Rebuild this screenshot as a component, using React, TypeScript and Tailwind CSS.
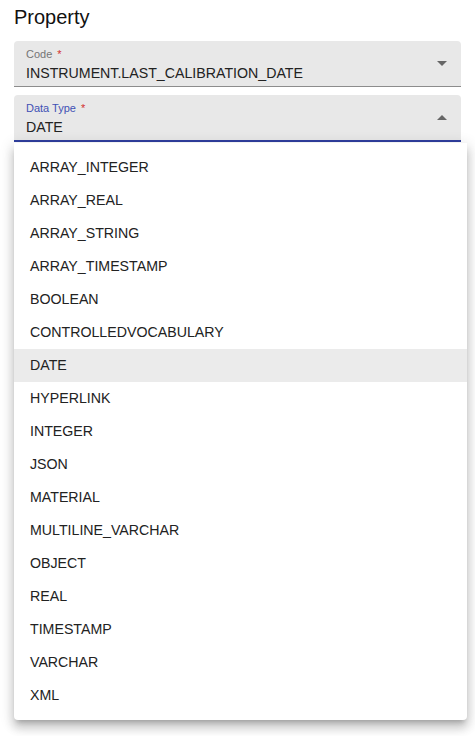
import React from "react";

const items = [
  "ARRAY_INTEGER",
  "ARRAY_REAL",
  "ARRAY_STRING",
  "ARRAY_TIMESTAMP",
  "BOOLEAN",
  "CONTROLLEDVOCABULARY",
  "DATE",
  "HYPERLINK",
  "INTEGER",
  "JSON",
  "MATERIAL",
  "MULTILINE_VARCHAR",
  "OBJECT",
  "REAL",
  "TIMESTAMP",
  "VARCHAR",
  "XML",
];

function Arrow({ up }: { up?: boolean }) {
  return (
    <svg width="10" height="5" viewBox="0 0 10 5" className="shrink-0">
      {up ? <path d="M0 5 L5 0 L10 5 Z" fill="#666" /> : <path d="M0 0 L5 5 L10 0 Z" fill="#666" />}
    </svg>
  );
}

export default function App() {
  return (
    <div className="w-[475px] h-[736px] bg-white relative overflow-hidden" style={{ fontFamily: "'Liberation Sans', Arial, sans-serif" }}>
      <div className="px-[14px] pt-[5px]">
        <div className="text-[20px] leading-[24px] text-[#111]">Property</div>
        <div className="mt-[12px] h-[46px] bg-[#e8e8e8] rounded-t-[4px] border-b border-[#8c8c8c] flex items-center pl-[12px] pr-[14px]">
          <div className="flex-1 flex flex-col">
            <div className="text-[11px] leading-[13px] text-[#757575] mt-[2px]">
              Code <span className="text-[#d32f2f] ml-[2px]">*</span>
            </div>
            <div className="text-[14.2px] leading-[17px] text-[#222] mt-[4px]">INSTRUMENT.LAST_CALIBRATION_DATE</div>
          </div>
          <Arrow />
        </div>
        <div className="mt-[8px] h-[47px] bg-[#e8e8e8] rounded-t-[4px] border-b-2 border-[#303f9f] flex items-center pl-[12px] pr-[14px]">
          <div className="flex-1 flex flex-col">
            <div className="text-[11px] leading-[13px] text-[#3f51b5] mt-[2px]">
              Data Type <span className="text-[#d32f2f] ml-[2px]">*</span>
            </div>
            <div className="text-[14.2px] leading-[17px] text-[#222] mt-[4px]">DATE</div>
          </div>
          <Arrow up />
        </div>
      </div>
      <div className="absolute left-[14px] top-[143px] w-[453px] bg-white rounded-b-[4px] py-[8px] shadow-[0_5px_5px_-3px_rgba(0,0,0,0.2),0_8px_10px_1px_rgba(0,0,0,0.14),0_3px_14px_2px_rgba(0,0,0,0.12)]">
        {items.map((it) => (
          <div
            key={it}
            className={`h-[33px] flex items-center pl-[16px] text-[14.2px] text-[#222] ${it === "DATE" ? "bg-[#ebebeb]" : ""}`}
          >
            {it}
          </div>
        ))}
      </div>
    </div>
  );
}
